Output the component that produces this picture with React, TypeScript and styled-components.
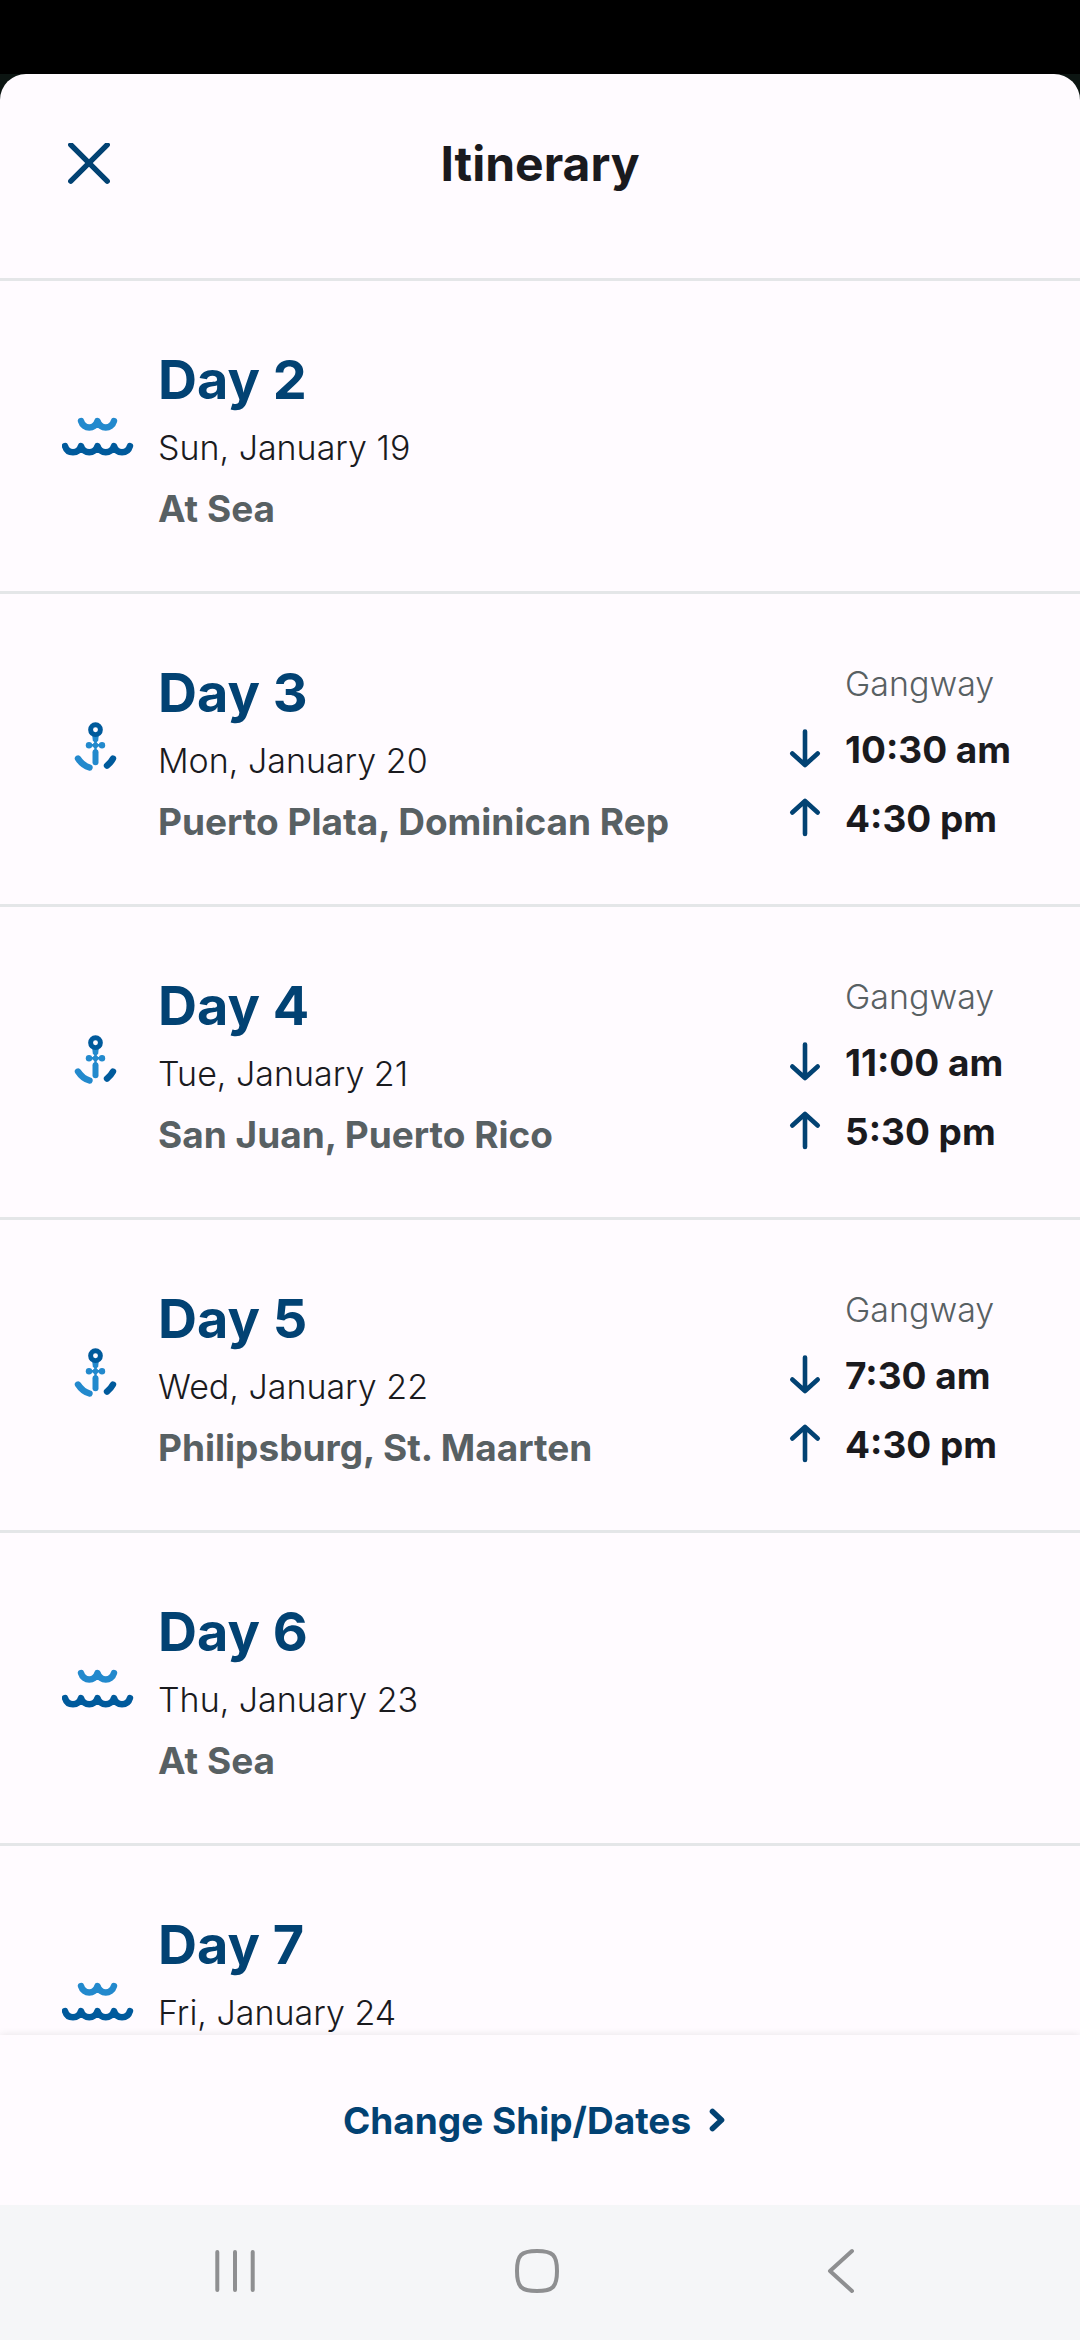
import React from "react";
import styled, { createGlobalStyle } from "styled-components";

const GlobalStyle = createGlobalStyle`
  *, *::before, *::after { box-sizing: border-box; }
  body { margin: 0; background: #000; }
  button { font: inherit; color: inherit; background: none; border: 0; padding: 0; cursor: pointer; }
  svg { display: block; }
`;

const colors = {
  navy: "#024273",
  ocean: "#005a9c",
  sky: "#2389cd",
  ink: "#1a1a1e",
  slate: "#586063",
  surface: "#fffbff",
  line: "#e4e6e8",
};

const Screen = styled.div`
  display: flex;
  flex-direction: column;
  height: 100vh;
  font-family: Inter, "Open Sans", sans-serif;
  color: ${colors.ink};
  background: #0c1512;
`;

const StatusBar = styled.div`
  flex: none;
  height: 74px;
  background: #000;
`;

const Sheet = styled.main`
  flex: 1;
  min-height: 0;
  display: flex;
  flex-direction: column;
  overflow: hidden;
  border-radius: 26px 26px 0 0;
  background: ${colors.surface};
`;

const Header = styled.header`
  flex: none;
  display: grid;
  grid-template-columns: 72px 1fr 72px;
  align-items: center;
  padding: 54px 53px 78px;
  border-bottom: 3px solid ${colors.line};
`;

const CloseButton = styled.button`
  display: grid;
  place-items: center;
  height: 72px;
`;

const Title = styled.h1`
  margin: 0;
  font-size: 48px;
  font-weight: 700;
  line-height: 72px;
  text-align: center;
`;

const DayList = styled.ol`
  flex: 1;
  min-height: 0;
  margin: 0;
  padding: 0;
  list-style: none;
  overflow-y: auto;
  scrollbar-width: none;
`;

const DayRow = styled.li`
  display: flex;
  align-items: center;
  padding: 50px 51px 50px 62px;
  border-bottom: 3px solid ${colors.line};
`;

const Details = styled.div`
  flex: 1;
  min-height: 210px;
  padding: 12px 0 0 24px;
`;

const DayName = styled.h2`
  margin: 0;
  font-size: 54px;
  font-weight: 700;
  line-height: 74px;
  color: ${colors.navy};
`;

const DateText = styled.p`
  margin: 0;
  font-size: 34px;
  font-weight: 300;
  line-height: 61px;
`;

const Place = styled.p`
  margin: 0;
  font-size: 37px;
  font-weight: 700;
  line-height: 61px;
  color: ${colors.slate};
`;

const Gangway = styled.dl`
  flex: none;
  align-self: flex-start;
  display: grid;
  grid-template-columns: 48px 184px;
  column-gap: 16px;
  align-items: center;
  margin: 0;
  padding-top: 8px;
`;

const GangwayLabel = styled.dt`
  grid-column: 2;
  font-size: 34px;
  font-weight: 300;
  line-height: 63px;
  color: ${colors.slate};
`;

const Time = styled.dd`
  grid-column: 1 / -1;
  display: grid;
  grid-template-columns: subgrid;
  align-items: center;
  margin: 0;
  font-size: 37px;
  font-weight: 700;
  line-height: 69px;
`;

const Footer = styled.footer`
  flex: none;
  display: grid;
  place-items: center;
  height: 170px;
  background: ${colors.surface};
  box-shadow: 0 0 8px rgba(0, 0, 0, 0.1);
`;

const ChangeButton = styled.button`
  display: flex;
  align-items: center;
  gap: 18px;
  font-size: 37px;
  font-weight: 700;
  line-height: 61px;
  color: ${colors.navy};
`;

const NavBar = styled.nav`
  flex: none;
  display: grid;
  grid-template-columns: repeat(3, 1fr);
  height: 135px;
  padding: 0 90px 4px 84px;
  background: #f5f6f8;
`;

const NavButton = styled.button`
  display: grid;
  place-items: center;
`;

const CloseIcon = () => (
  <svg width="42" height="42" viewBox="0 0 42 42" fill="none" stroke={colors.navy} strokeWidth="5.4" strokeLinecap="round" aria-hidden="true">
    <path d="M2.8 1.8 39.2 38.2M39.2 1.8 2.8 38.2" />
  </svg>
);

const SeaIcon = () => (
  <svg width="72" height="72" viewBox="0 0 72 72" fill="none" strokeWidth="6.4" strokeLinecap="round" strokeLinejoin="round" aria-hidden="true">
    <path stroke={colors.sky} d="M19 21C21.5 29.6 33 29.6 35.5 21C38 29.6 49.5 29.6 52 21" />
    <path stroke={colors.ocean} d="M3 46C5.500 54.400 16.500 54.400 19 46C21.500 54.400 33 54.400 35.500 46C38 54.400 49.500 54.400 52 46C54.500 54.400 65.500 54.400 68 46" />
  </svg>
);

const AnchorIcon = () => (
  <svg width="72" height="72" viewBox="0 0 72 72" fill="none" strokeLinecap="round" aria-hidden="true">
    <path fill={colors.sky} d="M30.2 22h6.6l-.6 5.4-1.6 2.2h-2.2l-1.600-2.2z" />
    <circle cx="33.5" cy="16.7" r="4.9" stroke={colors.ocean} strokeWidth="4.9" />
    <path stroke={colors.sky} strokeWidth="2.4" d="M27 32.2h13M33.5 29v8" />
    <g fill={colors.sky}>
      <circle cx="27" cy="32.2" r="3.2" />
      <circle cx="33.5" cy="32.2" r="2.8" />
      <circle cx="40" cy="32.2" r="3.2" />
    </g>
    <path stroke={colors.sky} strokeWidth="6" d="M33.5 39.2v10" />
    <path stroke={colors.sky} strokeWidth="6.4" d="M16 45.5Q20.5 52.5 27.5 54.5" />
    <path stroke={colors.ocean} strokeWidth="6.4" d="M51 45.6Q48.8 49.8 45 52.6" />
  </svg>
);

const ArrowIcon = ({ up }: { up?: boolean }) => (
  <svg width="48" height="48" viewBox="0 0 48 48" fill="none" stroke={colors.navy} strokeWidth="4.6" strokeLinecap="round" strokeLinejoin="round" role="img" aria-label={up ? "Closes" : "Opens"}>
    <path d={up ? "M24 39V6M11.3 17.5 24 6 36.7 17.5" : "M24 5.5V39M11.3 27.5 24 39 36.7 27.5"} />
  </svg>
);

const ChevronIcon = () => (
  <svg width="28" height="24" viewBox="0 0 28 24" fill="none" stroke={colors.navy} strokeWidth="5.6" strokeLinecap="round" strokeLinejoin="round" aria-hidden="true">
    <path d="M3.5 3.5 12.5 12 3.5 20.5" />
  </svg>
);

const navStroke = {
  width: 46,
  height: 46,
  viewBox: "0 0 46 46",
  fill: "none",
  stroke: "#8e8f91",
  strokeWidth: 4,
  strokeLinecap: "round" as const,
};

const RecentsIcon = () => (
  <svg {...navStroke} aria-hidden="true">
    <path d="M5.3 4v38M23 4v38M40.7 4v38" />
  </svg>
);

const HomeIcon = () => (
  <svg {...navStroke} aria-hidden="true">
    <path d="M23 3C39 3 43 7 43 23S39 43 23 43 3 39 3 23 7 3 23 3Z" />
  </svg>
);

const BackIcon = () => (
  <svg {...navStroke} strokeLinejoin="round" aria-hidden="true">
    <path d="M36 3 14 23 36 43" />
  </svg>
);

type Day = { day: number; date: string; place?: string; opens?: string; closes?: string };

const days: Day[] = [
  { day: 2, date: "Sun, January 19", place: "At Sea" },
  { day: 3, date: "Mon, January 20", place: "Puerto Plata, Dominican Rep", opens: "10:30 am", closes: "4:30 pm" },
  { day: 4, date: "Tue, January 21", place: "San Juan, Puerto Rico", opens: "11:00 am", closes: "5:30 pm" },
  { day: 5, date: "Wed, January 22", place: "Philipsburg, St. Maarten", opens: "7:30 am", closes: "4:30 pm" },
  { day: 6, date: "Thu, January 23", place: "At Sea" },
  { day: 7, date: "Fri, January 24" },
];

export default function App() {
  return (
    <Screen>
      <GlobalStyle />
      <StatusBar />
      <Sheet>
        <Header>
          <CloseButton aria-label="Close">
            <CloseIcon />
          </CloseButton>
          <Title>Itinerary</Title>
        </Header>
        <DayList>
          {days.map(({ day, date, place, opens, closes }) => (
            <DayRow key={day}>
              {opens ? <AnchorIcon /> : <SeaIcon />}
              <Details>
                <DayName>Day {day}</DayName>
                <DateText>{date}</DateText>
                {place && <Place>{place}</Place>}
              </Details>
              {opens && (
                <Gangway>
                  <GangwayLabel>Gangway</GangwayLabel>
                  <Time>
                    <ArrowIcon />
                    {opens}
                  </Time>
                  <Time>
                    <ArrowIcon up />
                    {closes}
                  </Time>
                </Gangway>
              )}
            </DayRow>
          ))}
        </DayList>
        <Footer>
          <ChangeButton>
            Change Ship/Dates
            <ChevronIcon />
          </ChangeButton>
        </Footer>
      </Sheet>
      <NavBar>
        <NavButton aria-label="Recent apps">
          <RecentsIcon />
        </NavButton>
        <NavButton aria-label="Home">
          <HomeIcon />
        </NavButton>
        <NavButton aria-label="Back">
          <BackIcon />
        </NavButton>
      </NavBar>
    </Screen>
  );
}
